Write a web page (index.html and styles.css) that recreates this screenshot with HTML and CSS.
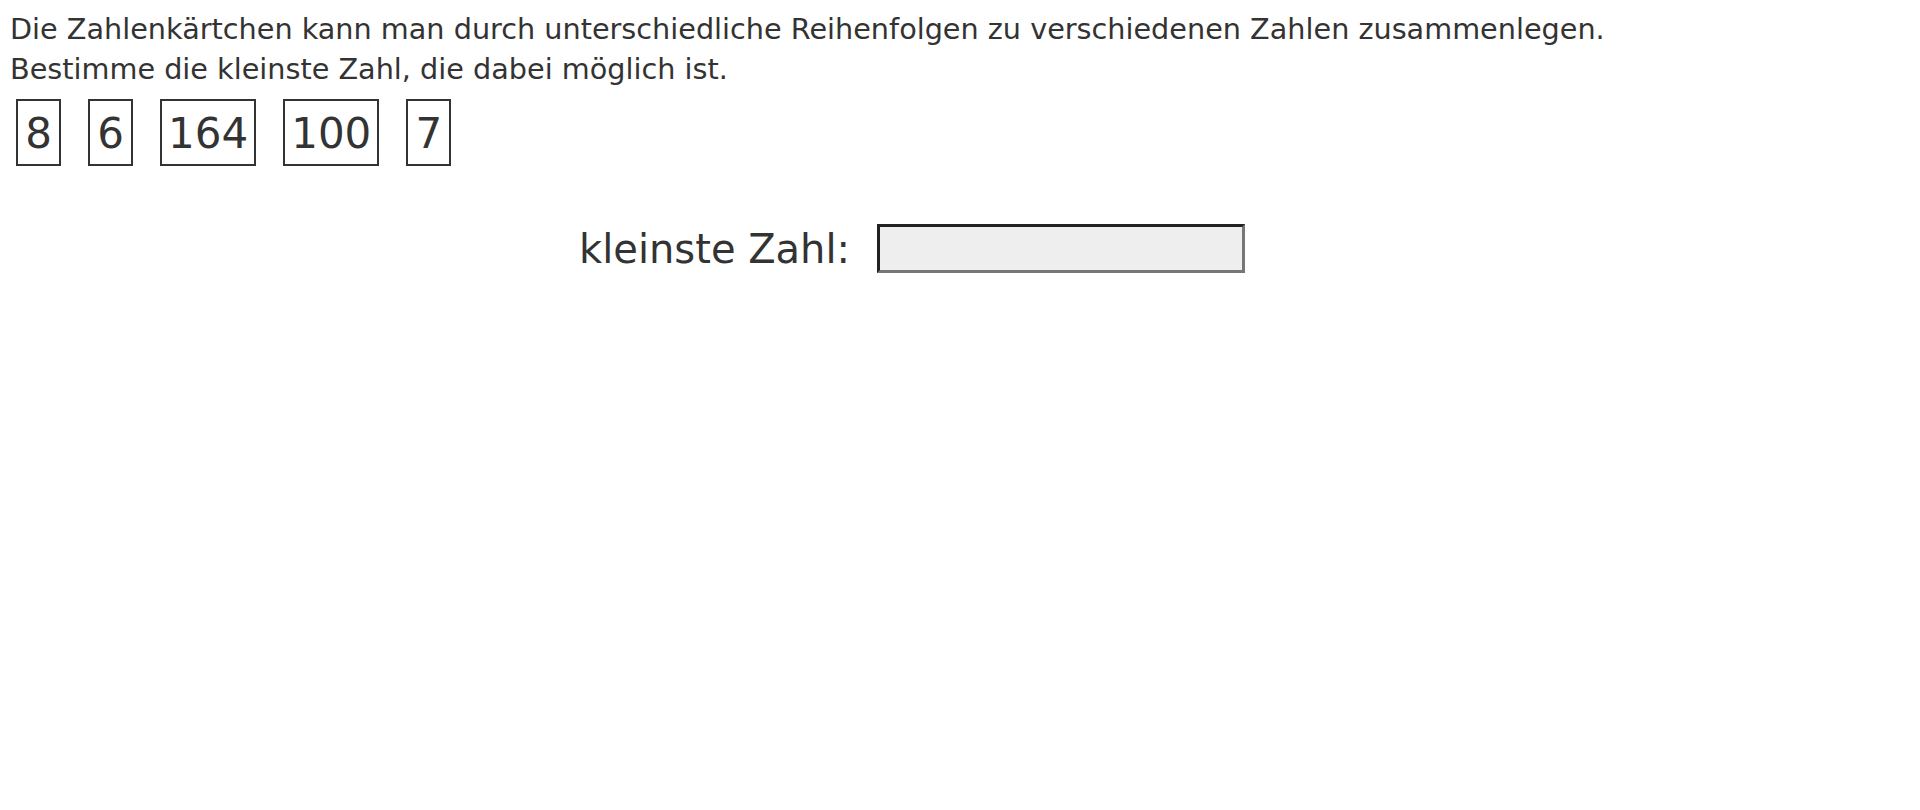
FILE: index.html
```html
<!DOCTYPE html>
<html lang="de">
<head>
<meta charset="utf-8">
<title>Zahlenkärtchen</title>
<link rel="stylesheet" href="styles.css">
</head>
<body>
<div class="task">
  <p class="text">Die Zahlenkärtchen kann man durch unterschiedliche Reihenfolgen zu verschiedenen Zahlen zusammenlegen.<br>Bestimme die kleinste Zahl, die dabei möglich ist.</p>
  <div class="cards">
    <span class="card">8</span>
    <span class="card">6</span>
    <span class="card">164</span>
    <span class="card">100</span>
    <span class="card">7</span>
  </div>
  <div class="answer">
    <label class="label" for="ans">kleinste Zahl:</label>
    <input id="ans" class="field" type="text">
  </div>
</div>
</body>
</html>
```
FILE: styles.css
```css
html, body {
  margin: 0;
  padding: 0;
  background: #fff;
}
body {
  font-family: "DejaVu Sans", Verdana, sans-serif;
  color: #333;
}
.task {
  padding: 9px 10px 0 10px;
}
.text {
  margin: 0;
  font-size: 28.7px;
  line-height: 40px;
}
.cards {
  display: flex;
  gap: 27px;
  margin-top: 10px;
  padding-left: 6px;
}
.card {
  box-sizing: border-box;
  height: 67px;
  min-width: 45px;
  padding: 0 6px;
  border: 2px solid #333;
  font-size: 42px;
  line-height: 66px;
  text-align: center;
}
.answer {
  display: flex;
  align-items: center;
  gap: 27px;
  margin-top: 58px;
  padding-left: 569px;
}
.label {
  font-size: 40px;
}
.field {
  box-sizing: border-box;
  width: 368px;
  height: 49px;
  margin: 0;
  border-style: solid;
  border-width: 3px;
  border-color: #222 #777 #777 #222;
  background: #eee;
}
```
